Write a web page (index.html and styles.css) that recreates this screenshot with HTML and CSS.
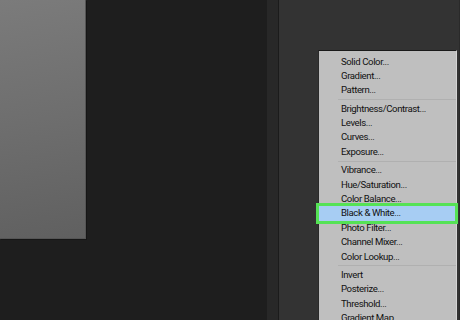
FILE: index.html
```html
<!DOCTYPE html>
<html lang="en">
<head>
    <meta charset="UTF-8">
    <title>Adjustment Layer Menu</title>
    <link rel="stylesheet" href="styles.css">
</head>
<body>
    <div class="workspace">
        <div class="canvas-area">
            <div class="document"></div>
        </div>
        <div class="dock-strip"></div>
        <div class="panel"></div>
    </div>

    <ul class="menu">
        <li class="menu-item">Solid Color...</li>
        <li class="menu-item">Gradient...</li>
        <li class="menu-item">Pattern...</li>
        <li class="menu-sep"></li>
        <li class="menu-item">Brightness/Contrast...</li>
        <li class="menu-item">Levels...</li>
        <li class="menu-item">Curves...</li>
        <li class="menu-item">Exposure...</li>
        <li class="menu-sep"></li>
        <li class="menu-item">Vibrance...</li>
        <li class="menu-item">Hue/Saturation...</li>
        <li class="menu-item">Color Balance...</li>
        <li class="menu-item selected">Black &amp; White...</li>
        <li class="menu-item">Photo Filter...</li>
        <li class="menu-item">Channel Mixer...</li>
        <li class="menu-item">Color Lookup...</li>
        <li class="menu-sep"></li>
        <li class="menu-item">Invert</li>
        <li class="menu-item">Posterize...</li>
        <li class="menu-item">Threshold...</li>
        <li class="menu-item">Gradient Map...</li>
    </ul>
</body>
</html>
```

FILE: styles.css
```css
* {
    margin: 0;
    padding: 0;
    box-sizing: border-box;
}

body {
    width: 460px;
    height: 320px;
    overflow: hidden;
    background: #1e1e1e;
    font-family: 'Roboto', 'Open Sans', sans-serif;
    position: relative;
}

.workspace {
    display: flex;
    height: 320px;
}

.canvas-area {
    width: 267px;
    background: #1e1e1e;
}

.document {
    width: 86px;
    height: 239px;
    background: linear-gradient(170deg, #7b7b7b 0%, #6e6e6e 50%, #606060 100%);
    border-right: 1px solid #555;
    border-bottom: 1px solid #555;
    box-shadow: 1px 1px 0 #161616;
}

.dock-strip {
    width: 12px;
    background: #282828;
    border-right: 1px solid #1b1b1b;
}

.panel {
    flex: 1;
    background: #333333;
    border-right: 1px solid #2a2a2a;
}

/* popup menu */
.menu {
    list-style: none;
    position: absolute;
    left: 318px;
    top: 50px;
    width: 139px;
    padding: 3.5px 0 0;
    background: #bfbfbf;
    border-top: 1px solid #1a1a1a;
    border-left: 1px solid #2a2a2a;
    border-right: 1px solid #d4d4d4;
    height: 280px;
}

.menu-item {
    height: 14.4px;
    line-height: 14.4px;
    padding-left: 22px;
    font-size: 9.6px;
    letter-spacing: -0.4px;
    color: #111;
    white-space: nowrap;
}

.menu-sep {
    height: 1px;
    margin: 1.5px 0 1.5px 19px;
    background: #b0b0b0;
}

.menu-item.selected {
    background: #a7cdf3;
    outline: 3px solid #55e255;
    margin: 0 1px 0 0;
    position: relative;
}
```
